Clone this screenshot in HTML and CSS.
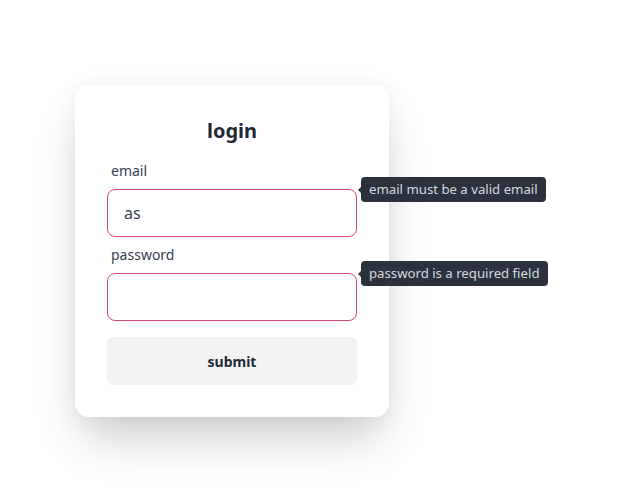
FILE: index.html
```html
<!DOCTYPE html>
<html>
<head>
<meta charset="utf-8">
<link rel="stylesheet" href="styles.css">
</head>
<body>
<div class="page">
  <form class="card">
    <h1 class="title">login</h1>
    <div class="field">
      <label class="label">email</label>
      <div class="control">
        <input class="input" type="text" value="as">
        <div class="tip">email must be a valid email</div>
      </div>
    </div>
    <div class="field">
      <label class="label">password</label>
      <div class="control">
        <input class="input" type="password" value="">
        <div class="tip">password is a required field</div>
      </div>
    </div>
    <button class="btn" type="button">submit</button>
  </form>
</div>
</body>
</html>
```
FILE: styles.css
```css
html, body {
  margin: 0;
  padding: 0;
  background: #ffffff;
  height: 100%;
}
body {
  font-family: "Noto Sans", "Open Sans", sans-serif;
  color: #1f2937;
}
.page {
  box-sizing: border-box;
  min-height: 100vh;
  padding: 85px 0 0 75px;
}
.card {
  width: 250px;
  padding: 32px;
  background: #fff;
  border-radius: 14px;
  box-shadow: 0 0 24px rgba(0,0,0,0.05), 0 28px 48px -8px rgba(0,0,0,0.2);
  display: flex;
  flex-direction: column;
}
.title {
  margin: 0;
  font-size: 20px;
  line-height: 28px;
  font-weight: 700;
  text-align: center;
  color: #1f2937;
}
.field {
  display: flex;
  flex-direction: column;
  margin-top: 16px;
}
.field + .field {
  margin-top: 8px;
}
.label {
  font-size: 14px;
  line-height: 20px;
  color: #374151;
  padding-left: 4px;
  margin-bottom: 8px;
}
.control {
  position: relative;
}
.input {
  box-sizing: border-box;
  width: 250px;
  height: 48px;
  border: 1px solid #c9506e;
  border-radius: 8px;
  padding: 0 16px;
  font-family: inherit;
  font-size: 16px;
  color: #374151;
  outline: none;
  display: block;
}
.tip {
  position: absolute;
  left: 254px;
  top: -12px;
  height: 25px;
  line-height: 25px;
  padding: 0 8px;
  background: #2b323e;
  color: #d5d9de;
  font-size: 13.2px;
  border-radius: 4px;
  white-space: nowrap;
}
.tip::before {
  content: "";
  position: absolute;
  left: -3px;
  top: 10px;
  border-style: solid;
  border-width: 3px 3px 3px 0;
  border-color: transparent #2b323e transparent transparent;
}
.btn {
  margin-top: 16px;
  height: 48px;
  width: 250px;
  border: none;
  border-radius: 6px;
  background: #f2f2f2;
  font-family: inherit;
  font-size: 14px;
  font-weight: 700;
  color: #1f2937;
}
```
